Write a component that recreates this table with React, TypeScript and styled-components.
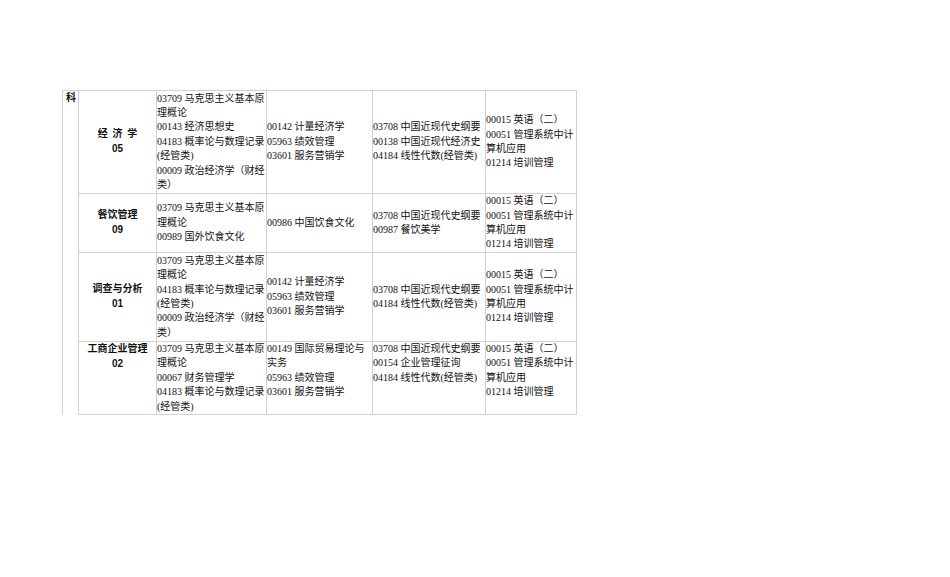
import styled, { createGlobalStyle } from 'styled-components';

const GlobalStyle = createGlobalStyle`
  html, body {
    margin: 0;
    padding: 0;
    background: #ffffff;
  }
`;

const Page = styled.div`
  padding: 90px 0 0 62px;
  width: 950px;
  height: 577px;
  box-sizing: border-box;
`;

const Table = styled.table`
  border-collapse: collapse;
  table-layout: fixed;
  width: 514px;
  color: #111;
  font-family: 'Liberation Serif', 'Noto Sans CJK SC', serif;
  font-size: 10px;
  line-height: 14.4px;
`;

const Row = styled.tr<{ $h: number }>`
  height: ${(p) => p.$h}px;
`;

const Cell = styled.td<{ $top?: boolean }>`
  border: 1px solid #d2d2d2;
  padding: 0;
  vertical-align: ${(p) => (p.$top ? 'top' : 'middle')};
  white-space: normal;
  word-break: normal;
`;

const SideCell = styled.td`
  border: 1px solid #d2d2d2;
  border-bottom: none;
  padding: 0 0 0 3px;
  vertical-align: top;
  font-family: 'Liberation Sans', 'Noto Sans CJK SC', sans-serif;
  font-weight: 700;
  font-size: 10px;
`;

const MajorCell = styled(Cell)`
  text-align: center;
  font-family: 'Liberation Sans', 'Noto Sans CJK SC', sans-serif;
  font-weight: 700;
  line-height: 14.8px;
`;

const MajorName = styled.div<{ $spaced?: boolean }>`
  word-spacing: ${(p) => (p.$spaced ? '2px' : '0')};
  white-space: nowrap;
`;

const Course = styled.div``;

interface Major {
  name: string;
  code: string;
  spaced?: boolean;
  height: number;
  top?: boolean;
  groups: string[][];
}

const majors: Major[] = [
  {
    name: '经 济 学',
    code: '05',
    spaced: true,
    height: 103,
    groups: [
      ['03709 马克思主义基本原理概论', '00143 经济思想史', '04183 概率论与数理记录(经管类)', '00009 政治经济学（财经类）'],
      ['00142 计量经济学', '05963 绩效管理', '03601 服务营销学'],
      ['03708 中国近现代史纲要', '00138 中国近现代经济史', '04184 线性代数(经管类)'],
      ['00015 英语（二）', '00051 管理系统中计算机应用', '01214 培训管理'],
    ],
  },
  {
    name: '餐饮管理',
    code: '09',
    height: 59,
    groups: [
      ['03709 马克思主义基本原理概论', '00989 国外饮食文化'],
      ['00986 中国饮食文化'],
      ['03708 中国近现代史纲要', '00987 餐饮美学'],
      ['00015 英语（二）', '00051 管理系统中计算机应用', '01214 培训管理'],
    ],
  },
  {
    name: '调查与分析',
    code: '01',
    height: 89,
    groups: [
      ['03709 马克思主义基本原理概论', '04183 概率论与数理记录(经管类)', '00009 政治经济学（财经类）'],
      ['00142 计量经济学', '05963 绩效管理', '03601 服务营销学'],
      ['03708 中国近现代史纲要', '04184 线性代数(经管类)'],
      ['00015 英语（二）', '00051 管理系统中计算机应用', '01214 培训管理'],
    ],
  },
  {
    name: '工商企业管理',
    code: '02',
    height: 73,
    top: true,
    groups: [
      ['03709 马克思主义基本原理概论', '00067 财务管理学', '04183 概率论与数理记录(经管类)'],
      ['00149 国际贸易理论与实务', '05963 绩效管理', '03601 服务营销学'],
      ['03708 中国近现代史纲要', '00154 企业管理征询', '04184 线性代数(经管类)'],
      ['00015 英语（二）', '00051 管理系统中计算机应用', '01214 培训管理'],
    ],
  },
];

const colWidths = [16, 78, 110, 106, 113, 91];

export default function App() {
  return (
    <>
      <GlobalStyle />
      <Page>
        <Table>
          <colgroup>
            {colWidths.map((w, i) => (
              <col key={i} style={{ width: w }} />
            ))}
          </colgroup>
          <tbody>
            {majors.map((m, i) => (
              <Row key={m.code + m.name} $h={m.height}>
                {i === 0 && <SideCell rowSpan={majors.length}>科</SideCell>}
                <MajorCell $top={m.top}>
                  <MajorName $spaced={m.spaced}>{m.name}</MajorName>
                  <div>{m.code}</div>
                </MajorCell>
                {m.groups.map((g, j) => (
                  <Cell key={j} $top={m.top}>
                    {g.map((c) => (
                      <Course key={c}>{c}</Course>
                    ))}
                  </Cell>
                ))}
              </Row>
            ))}
          </tbody>
        </Table>
      </Page>
    </>
  );
}
